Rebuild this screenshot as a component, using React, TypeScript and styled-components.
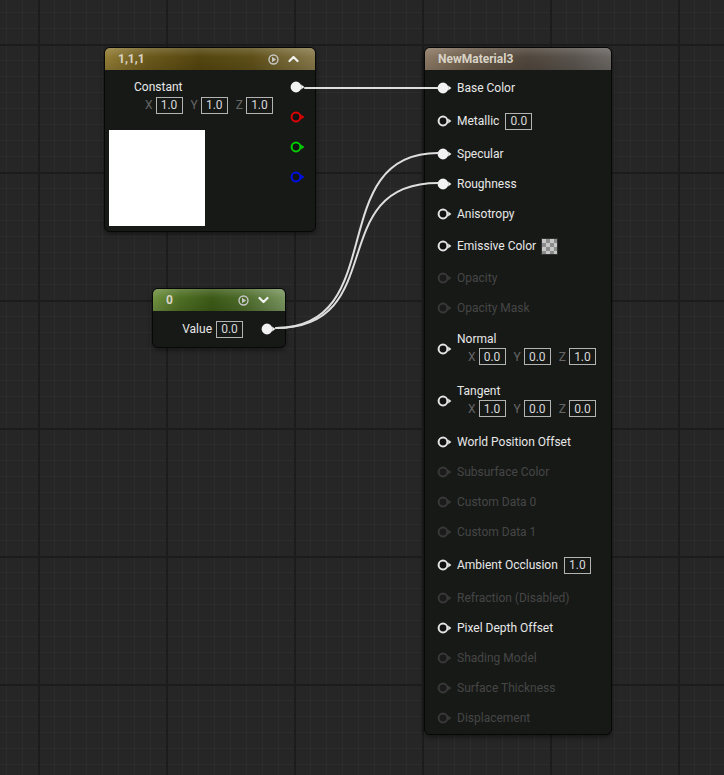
import React from "react";
import styled, { createGlobalStyle } from "styled-components";

type Tone = "constant" | "scalar" | "material";
type PinKind = "filled" | "ring" | "disabled";

const GlobalStyle = createGlobalStyle`
  html, body {
    margin: 0;
    padding: 0;
    background: #262626;
  }
  body {
    font-family: Roboto, "Liberation Sans", sans-serif;
    font-size: 12px;
  }
`;

const headerBg: Record<Tone, string> = {
  constant:
    "linear-gradient(180deg, rgba(255,255,255,0.16) 0%, rgba(255,255,255,0) 40%, rgba(0,0,0,0.12) 100%), linear-gradient(90deg, #927d36 0%, #6c5a1c 20%, #55460f 45%, #5f5019 70%, #887a4b 100%)",
  scalar:
    "linear-gradient(180deg, rgba(255,255,255,0.16) 0%, rgba(255,255,255,0) 40%, rgba(0,0,0,0.12) 100%), linear-gradient(90deg, #6f9140 0%, #4f7024 20%, #3c5a17 45%, #4d6c2b 70%, #7a9660 100%)",
  material:
    "linear-gradient(180deg, rgba(255,255,255,0.14) 0%, rgba(255,255,255,0) 40%, rgba(0,0,0,0.12) 100%), linear-gradient(90deg, #8e7b66 0%, #6c5c4b 25%, #51473d 55%, #5a544e 80%, #6c6864 100%)",
};

const Canvas = styled.div`
  position: relative;
  width: 724px;
  height: 775px;
  overflow: hidden;
  background-color: #262626;
  background-image: linear-gradient(to right, #1c1c1c 2px, transparent 2px),
    linear-gradient(to bottom, #1c1c1c 2px, transparent 2px),
    linear-gradient(to right, #2c2c2c 1px, transparent 1px),
    linear-gradient(to bottom, #2c2c2c 1px, transparent 1px);
  background-size: 128px 128px, 128px 128px, 16px 16px, 16px 16px;
  background-position: 38px 0, 0 44px, 6px 0, 0 12px;
`;

const Node = styled.div<{ $x: number; $y: number; $w: number }>`
  position: absolute;
  left: ${(p) => p.$x}px;
  top: ${(p) => p.$y}px;
  width: ${(p) => p.$w}px;
  box-sizing: border-box;
  background: #171917;
  border: 1px solid #070707;
  border-radius: 6px;
  box-shadow: 0 2px 5px rgba(0, 0, 0, 0.45);
  overflow: hidden;
`;

const Header = styled.div<{ $tone: Tone }>`
  height: 22px;
  display: flex;
  align-items: center;
  gap: 9px;
  padding: 0 16px 0 13px;
  background: ${(p) => headerBg[p.$tone]};
`;

const Title = styled.span`
  flex: 1;
  font-weight: 700;
  font-size: 12px;
  color: #d8d3c6;
`;

const PinGlyph = styled.svg`
  display: block;
  flex: none;
`;

const Label = styled.span<{ $off?: boolean }>`
  font-size: 12px;
  line-height: 18px;
  color: ${(p) => (p.$off ? "#464646" : "#e8e8e8")};
  white-space: nowrap;
`;

const ValueBox = styled.span`
  box-sizing: border-box;
  width: 27px;
  height: 17px;
  margin-left: 2px;
  border: 1px solid #b3b3b3;
  display: inline-flex;
  align-items: center;
  justify-content: center;
  font-size: 12px;
  color: #d8d8d8;
  flex: none;
`;

const VectorRow = styled.div<{ $indent: number }>`
  display: flex;
  align-items: center;
  height: 18px;
  margin-left: ${(p) => p.$indent}px;
`;

const Axis = styled.span`
  font-size: 12px;
  color: #666666;
  margin: 0 1px 0 8px;
  &:first-child {
    margin-left: 0;
  }
`;

/* constant node */
const ConstBody = styled.div`
  display: flex;
  padding: 0 9px 5px 4px;
`;

const ConstMain = styled.div`
  flex: 1;
  display: flex;
  flex-direction: column;
  padding-top: 9px;
`;

const ParamLabel = styled.span`
  font-size: 12px;
  line-height: 16px;
  color: #e8e8e8;
  margin-left: 25px;
`;

const ConstVector = styled.div`
  margin-top: 1px;
`;

const Preview = styled.div`
  width: 96px;
  height: 96px;
  margin-top: 16px;
  background: #ffffff;
`;

const PinColumn = styled.div`
  display: flex;
  flex-direction: column;
  padding-top: 2px;
`;

const PinSlot = styled.div`
  height: 30px;
  display: flex;
  align-items: center;
`;

/* scalar node */
const ScalarBody = styled.div`
  height: 36px;
  display: flex;
  align-items: center;
  justify-content: flex-end;
  padding-right: 8px;
  gap: 2px;
`;

const Spacer = styled.span<{ $w: number }>`
  width: ${(p) => p.$w}px;
  flex: none;
`;

/* material node */
const MaterialBody = styled.div`
  padding: 3px 0 1px;
`;

const Row = styled.div<{ $h: number }>`
  height: ${(p) => p.$h}px;
  display: flex;
  align-items: center;
  gap: 4px;
  padding-left: 12px;
`;

const Stack = styled.div`
  display: flex;
  flex-direction: column;
  margin-bottom: 3px;
`;

const Swatch = styled.span`
  box-sizing: border-box;
  width: 17px;
  height: 17px;
  margin-left: 1px;
  border: 1px solid #303030;
  background-color: #c6c6c6;
  background-image: conic-gradient(
    #8c8c8c 25%,
    transparent 0 50%,
    #8c8c8c 0 75%,
    transparent 0
  );
  background-size: 8px 8px;
  background-position: 0 0;
`;

const Wires = styled.svg`
  position: absolute;
  left: 0;
  top: 0;
  pointer-events: none;
`;

const Pin = ({ kind = "ring", color = "#e4e4e4" }: { kind?: PinKind; color?: string }) => {
  const stroke = kind === "disabled" ? "#383838" : color;
  const fill = kind === "filled" ? color : kind === "disabled" ? "#1a1b1a" : "#111211";
  return (
    <PinGlyph width={16} height={12} viewBox="0 0 16 12">
      <circle cx="6" cy="6" r="4.4" fill={fill} stroke={stroke} strokeWidth="2" />
      <path d="M11.2 3.6 L14.4 6 L11.2 8.4 Z" fill={stroke} />
    </PinGlyph>
  );
};

const PlayIcon = () => (
  <svg width={11} height={11} viewBox="0 0 11 11">
    <circle cx="5.5" cy="5.5" r="4.5" fill="none" stroke="#c6c6c6" strokeWidth="1.4" />
    <path d="M4 2.8 L8.2 5.5 L4 8.2 Z" fill="#c6c6c6" />
  </svg>
);

const Chevron = ({ up }: { up?: boolean }) => (
  <svg width={11} height={8} viewBox="0 0 11 8">
    <path
      d={up ? "M1.5 6 L5.5 2 L9.5 6" : "M1.5 2 L5.5 6 L9.5 2"}
      fill="none"
      stroke="#f2f2f2"
      strokeWidth="2.2"
      strokeLinecap="round"
      strokeLinejoin="round"
    />
  </svg>
);

const Vec = ({ v, indent }: { v: string[]; indent: number }) => (
  <VectorRow $indent={indent}>
    {["X", "Y", "Z"].map((a, i) => (
      <React.Fragment key={a}>
        <Axis>{a}</Axis>
        <ValueBox>{v[i]}</ValueBox>
      </React.Fragment>
    ))}
  </VectorRow>
);

type Input = {
  name: string;
  kind: PinKind;
  h?: number;
  value?: string;
  swatch?: boolean;
  vec?: string[];
};

const inputs: Input[] = [
  { name: "Base Color", kind: "filled" },
  { name: "Metallic", kind: "ring", h: 36, value: "0.0" },
  { name: "Specular", kind: "filled" },
  { name: "Roughness", kind: "filled" },
  { name: "Anisotropy", kind: "ring" },
  { name: "Emissive Color", kind: "ring", h: 34, swatch: true },
  { name: "Opacity", kind: "disabled" },
  { name: "Opacity Mask", kind: "disabled" },
  { name: "Normal", kind: "ring", h: 52, vec: ["0.0", "0.0", "1.0"] },
  { name: "Tangent", kind: "ring", h: 52, vec: ["1.0", "0.0", "0.0"] },
  { name: "World Position Offset", kind: "ring" },
  { name: "Subsurface Color", kind: "disabled" },
  { name: "Custom Data 0", kind: "disabled" },
  { name: "Custom Data 1", kind: "disabled" },
  { name: "Ambient Occlusion", kind: "ring", h: 36, value: "1.0" },
  { name: "Refraction (Disabled)", kind: "disabled" },
  { name: "Pixel Depth Offset", kind: "ring" },
  { name: "Shading Model", kind: "disabled" },
  { name: "Surface Thickness", kind: "disabled" },
  { name: "Displacement", kind: "disabled" },
];

const App = () => {
  return (
    <>
      <GlobalStyle />
      <Canvas>
        <Node $x={104} $y={47} $w={212}>
          <Header $tone="constant">
            <Title>1,1,1</Title>
            <PlayIcon />
            <Chevron up />
          </Header>
          <ConstBody>
            <ConstMain>
              <ParamLabel>Constant</ParamLabel>
              <ConstVector>
                <Vec v={["1.0", "1.0", "1.0"]} indent={36} />
              </ConstVector>
              <Preview />
            </ConstMain>
            <PinColumn>
              <PinSlot>
                <Pin kind="filled" color="#f2f2f2" />
              </PinSlot>
              <PinSlot>
                <Pin color="#e00000" />
              </PinSlot>
              <PinSlot>
                <Pin color="#00d000" />
              </PinSlot>
              <PinSlot>
                <Pin color="#0010e8" />
              </PinSlot>
            </PinColumn>
          </ConstBody>
        </Node>

        <Node $x={152} $y={288} $w={134}>
          <Header $tone="scalar">
            <Title>0</Title>
            <PlayIcon />
            <Chevron />
          </Header>
          <ScalarBody>
            <Label>Value</Label>
            <ValueBox>0.0</ValueBox>
            <Spacer $w={14} />
            <Pin kind="filled" color="#f2f2f2" />
          </ScalarBody>
        </Node>

        <Node $x={424} $y={47} $w={188}>
          <Header $tone="material">
            <Title>NewMaterial3</Title>
          </Header>
          <MaterialBody>
            {inputs.map((inp) => (
              <Row key={inp.name} $h={inp.h ?? 30}>
                <Pin kind={inp.kind} color={inp.kind === "filled" ? "#f2f2f2" : "#e4e4e4"} />
                {inp.vec ? (
                  <Stack>
                    <Label>{inp.name}</Label>
                    <Vec v={inp.vec} indent={11} />
                  </Stack>
                ) : (
                  <>
                    <Label $off={inp.kind === "disabled"}>{inp.name}</Label>
                    {inp.value && <ValueBox>{inp.value}</ValueBox>}
                    {inp.swatch && <Swatch />}
                  </>
                )}
              </Row>
            ))}
          </MaterialBody>
        </Node>

        <Wires width={724} height={775} viewBox="0 0 724 775">
          <g fill="none" stroke="#dedede" strokeWidth="2" strokeLinecap="round">
            <path d="M305 88 L438 88" />
            <path d="M276 328 C391 328, 323 153, 438 153" />
            <path d="M276 328 C391 328, 323 183, 438 183" />
          </g>
        </Wires>
      </Canvas>
    </>
  );
};

export default App;
